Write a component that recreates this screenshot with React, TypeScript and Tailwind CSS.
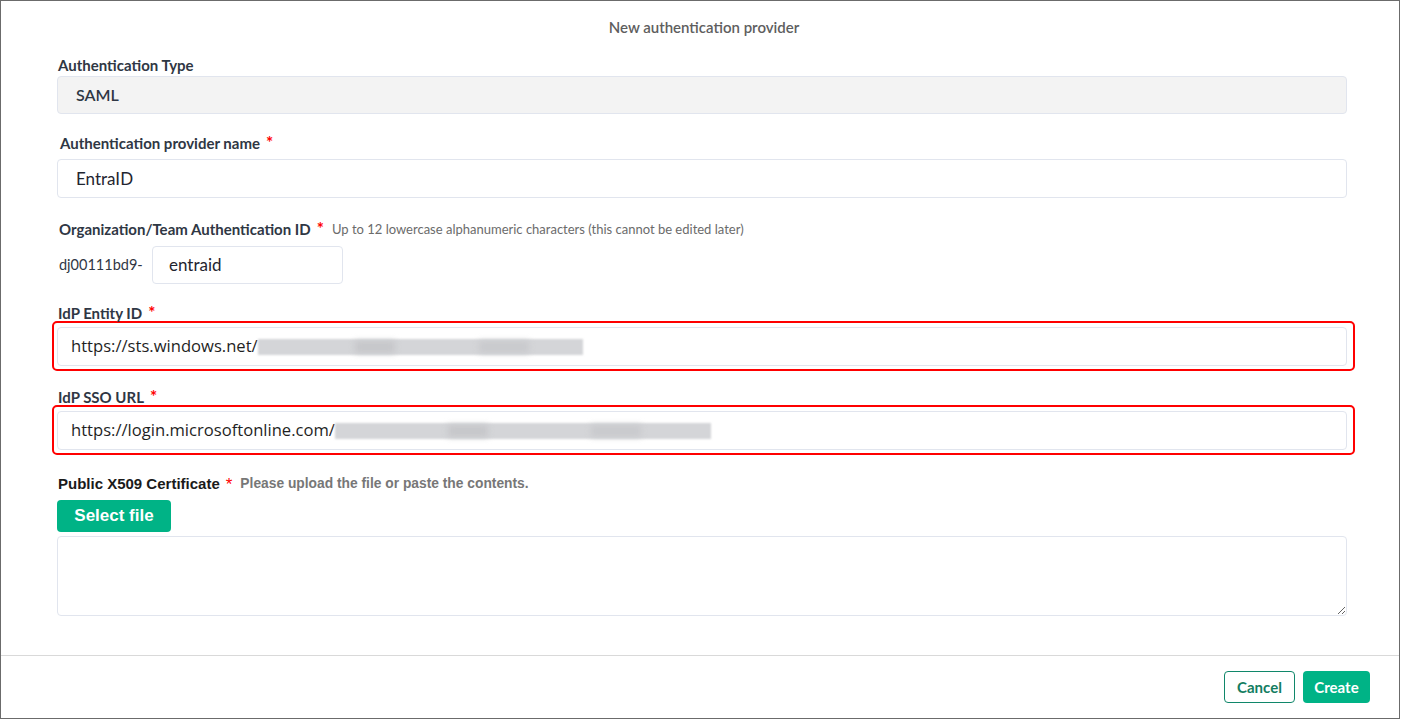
import React from "react"

const labelFont = { fontFamily: "Lato, 'Noto Sans', sans-serif" }

function Star() {
  return <span className="ml-[6px] text-[17px] leading-none text-[#ff0000]">*</span>
}

function Label({ children, required, className = "" }: { children: React.ReactNode; required?: boolean; className?: string }) {
  return (
    <div className={`flex items-start text-[15px] font-bold leading-[18px] text-[#2f3744] ${className}`} style={labelFont}>
      <span>{children}</span>
      {required && <Star />}
    </div>
  )
}

function Blurred({ width }: { width: number }) {
  return (
    <span className="relative inline-block h-[16px] align-middle" style={{ width }}>
      <span className="absolute inset-0 bg-[#d4d5d8] blur-[1px]" />
      <span className="absolute left-[30%] top-[2px] h-[12px] w-[40px] bg-[#c6c7ca] blur-[3px]" />
      <span className="absolute left-[68%] top-[2px] h-[12px] w-[50px] bg-[#c9cacd] blur-[3px]" />
    </span>
  )
}

function UrlField({ prefix, blur }: { prefix: string; blur: number }) {
  return (
    <div className="-mt-[1px] -ml-[5px] w-[1303px] rounded-[5px] border-2 border-[#ff0000] pb-[3px] pl-[3px] pr-[6px] pt-[4px]">
      <div
        className="flex h-[39px] items-center rounded-[4px] border border-[#e1e5ee] bg-white pl-[13px] text-[16.6px] text-[#1f1f1f]"
        style={{ fontFamily: "'Open Sans', 'Noto Sans', sans-serif" }}
      >
        <span>{prefix}</span>
        <Blurred width={blur} />
      </div>
    </div>
  )
}

export default function App() {
  return (
    <div className="h-[719px] w-[1400px] overflow-hidden border border-[#6b6b6b] bg-white">
      <div className="pt-[16px] pl-[8px] text-center text-[15px] font-semibold leading-[20px] text-[#5e5e5e]" style={labelFont}>
        New authentication provider
      </div>

      <div className="ml-[56px] w-[1290px]">
        {/* Authentication Type */}
        <Label className="mt-[19px] ml-[1px]">Authentication Type</Label>
        <div
          className="mt-[2px] flex h-[38px] items-center rounded-[4px] border border-[#e1e5ee] bg-[#f3f3f3] pl-[18px] text-[16px] font-semibold text-[#2f3744]"
          style={labelFont}
        >
          SAML
        </div>

        {/* Provider name */}
        <Label required className="mt-[20px] ml-[3px]">Authentication provider name</Label>
        <div
          className="mt-[7px] flex h-[39px] items-center rounded-[4px] border border-[#e1e5ee] bg-white pl-[18px] text-[17px] text-[#1f2530]"
          style={labelFont}
        >
          EntraID
        </div>

        {/* Org / team id */}
        <div className="mt-[22px] ml-[2px] flex items-start">
          <Label required>Organization/Team Authentication ID</Label>
          <span className="ml-[8px] text-[13px] leading-[18px] text-[#6b6b6b]" style={labelFont}>
            Up to 12 lowercase alphanumeric characters (this cannot be edited later)
          </span>
        </div>
        <div className="mt-[8px] ml-[2px] flex items-center">
          <span className="w-[93px] text-[14.5px] text-[#2f3744]" style={labelFont}>dj00111bd9-</span>
          <div
            className="flex h-[38px] w-[191px] items-center rounded-[4px] border border-[#e1e5ee] bg-white pl-[16px] text-[17px] text-[#1f2530]"
            style={labelFont}
          >
            entraid
          </div>
        </div>

        {/* IdP Entity ID */}
        <Label required className="mt-[20px] ml-[1px]">IdP Entity ID</Label>
        <UrlField prefix="https://sts.windows.net/" blur={325} />

        {/* IdP SSO URL */}
        <Label required className="mt-[17px] ml-[1px]">IdP SSO URL</Label>
        <UrlField prefix="https://login.microsoftonline.com/" blur={376} />

        {/* Certificate */}
        <div className="mt-[20px] ml-[1px] flex items-center" style={{ fontFamily: "'Liberation Sans', Arial, sans-serif" }}>
          <span className="text-[15px] font-bold leading-[18px] text-[#1a1a1a]">Public X509 Certificate</span>
          <span className="ml-[6px] text-[17px] leading-none text-[#ff0000]">*</span>
          <span className="ml-[8px] text-[13.8px] font-bold leading-[18px] text-[#777777]">Please upload the file or paste the contents.</span>
        </div>
        <button
          type="button"
          className="mt-[7px] h-[32px] w-[114px] rounded-[4px] bg-[#00b386] text-[17px] font-bold text-white"
          style={{ fontFamily: "'Liberation Sans', Arial, sans-serif" }}
        >
          Select file
        </button>
        <textarea className="mt-[4px] block h-[80px] w-[1290px] rounded-[4px] border border-[#e1e5ee] bg-white outline-none" />
      </div>

      <div className="mt-[39px] border-t border-[#d9d9d9]" />
      <div className="flex justify-end gap-[8px] pr-[29px] pt-[15px]" style={labelFont}>
        <button
          type="button"
          className="h-[32px] w-[71px] rounded-[4px] border border-[#10876a] bg-white text-[15px] font-bold text-[#137d61]"
        >
          Cancel
        </button>
        <button type="button" className="h-[32px] w-[67px] rounded-[4px] bg-[#00b386] text-[15px] font-bold text-white">
          Create
        </button>
      </div>
    </div>
  )
}
